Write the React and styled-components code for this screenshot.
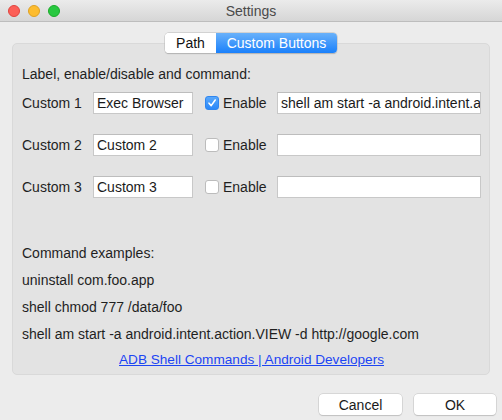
import React from "react";
import styled, { createGlobalStyle } from "styled-components";

const Global = createGlobalStyle`
  html, body { margin: 0; padding: 0; background: #ececec; }
  body { font-family: "Liberation Sans", Arial, sans-serif; font-size: 14px; color: #1f1f1f; }
  * { box-sizing: border-box; }
`;

const Window = styled.div`
  width: 502px;
  height: 420px;
  background: #ececec;
  display: flex;
  flex-direction: column;
  overflow: hidden;
`;

const TitleBar = styled.div`
  height: 22px;
  display: grid;
  grid-template-columns: 1fr auto 1fr;
  align-items: center;
  background: linear-gradient(#ebebeb, #d6d6d6);
  border-bottom: 1px solid #bdbdbd;
`;

const Lights = styled.div`
  display: flex;
  gap: 8px;
  padding-left: 8px;
`;

const Light = styled.span`
  width: 12px;
  height: 12px;
  border-radius: 50%;
  background: ${(p) => p.$c};
  border: 0.5px solid ${(p) => p.$b};
`;

const Title = styled.div`
  font-size: 14px;
  color: #4a4a4a;
`;

const Body = styled.div`
  display: flex;
  flex-direction: column;
  align-items: center;
  padding-top: 11px;
`;

const Tabs = styled.div`
  display: flex;
  height: 20px;
  margin-bottom: -10px;
  position: relative;
  z-index: 1;
  border-radius: 4px;
  background: #fff;
  box-shadow: 0 0 0 0.5px #bdbdbd, 0 0.5px 1px rgba(0, 0, 0, 0.25);
  overflow: hidden;
`;

const Tab = styled.div`
  display: flex;
  align-items: center;
  justify-content: center;
  width: ${(p) => p.$w}px;
  font-size: 14px;
  color: ${(p) => (p.$active ? "#fff" : "#111")};
  background: ${(p) => (p.$active ? "linear-gradient(#69b1fa, #1a80fb)" : "#fff")};
`;

const Panel = styled.div`
  align-self: stretch;
  margin: 0 12px;
  height: 332px;
  background: #e3e3e3;
  border: 1px solid #d9d9d9;
  border-radius: 5px;
  padding: 22px 8px 0 9px;
  display: flex;
  flex-direction: column;
`;

const Line = styled.div`
  line-height: 16px;
  height: 16px;
  white-space: nowrap;
`;

const Rows = styled.div`
  display: flex;
  flex-direction: column;
  gap: 20px;
  margin-top: 10px;
`;

const Row = styled.div`
  display: flex;
  align-items: center;
  height: 22px;
`;

const RowLabel = styled.div`
  width: 71px;
`;

const Field = styled.div`
  height: 22px;
  width: ${(p) => (p.$w ? `${p.$w}px` : "auto")};
  flex: ${(p) => (p.$w ? "none" : "1")};
  min-width: 0;
  background: #fff;
  border: 1px solid #c8c8c8;
  border-top-color: #bdbdbd;
  padding: 0 3px;
  display: flex;
  align-items: center;
  white-space: nowrap;
  overflow: hidden;
  color: #1a1a1a;
`;

const Check = styled.label`
  width: 84px;
  display: flex;
  align-items: center;
  gap: 4px;
  padding-left: 12px;
`;

const Box = styled.span`
  width: 14px;
  height: 14px;
  border-radius: 3px;
  display: flex;
  align-items: center;
  justify-content: center;
  background: ${(p) => (p.$on ? "linear-gradient(#59a8fb, #2b88f9)" : "#fff")};
  border: 1px solid ${(p) => (p.$on ? "#2f86f0" : "#bcbcbc")};
`;

const Examples = styled.div`
  display: flex;
  flex-direction: column;
  gap: 11px;
  margin-top: 47px;
`;

const Link = styled.a`
  align-self: center;
  font-size: 13.6px;
  line-height: 16px;
  margin-top: -1px;
  color: #1c45f3;
  text-decoration: underline;
`;

const Footer = styled.div`
  align-self: stretch;
  display: flex;
  justify-content: flex-end;
  gap: 12px;
  padding: 19px 6px 0 0;
`;

const Button = styled.button`
  width: ${(p) => p.$w}px;
  height: 21px;
  font-family: inherit;
  font-size: 14px;
  color: #1a1a1a;
  background: #fff;
  border: none;
  border-radius: 4px;
  box-shadow: 0 0 0 0.5px #c2c2c2, 0 1px 1px rgba(0, 0, 0, 0.18);
  padding: 0;
`;

const rows = [
  { label: "Custom 1", name: "Exec Browser", on: true, cmd: "shell am start -a android.intent.action.VIEW -d http://google.com" },
  { label: "Custom 2", name: "Custom 2", on: false, cmd: "" },
  { label: "Custom 3", name: "Custom 3", on: false, cmd: "" },
];

export default function App() {
  return (
    <Window>
      <Global />
      <TitleBar>
        <Lights>
          <Light $c="#fc5f57" $b="#e0443e" />
          <Light $c="#fdbc2e" $b="#dea123" />
          <Light $c="#28c840" $b="#1aab29" />
        </Lights>
        <Title>Settings</Title>
        <div />
      </TitleBar>
      <Body>
        <Tabs>
          <Tab $w={51}>Path</Tab>
          <Tab $w={121} $active>Custom Buttons</Tab>
        </Tabs>
        <Panel>
          <Line>Label, enable/disable and command:</Line>
          <Rows>
            {rows.map((r) => (
              <Row key={r.label}>
                <RowLabel>{r.label}</RowLabel>
                <Field $w={100}>{r.name}</Field>
                <Check>
                  <Box $on={r.on}>
                    {r.on && (
                      <svg width="10" height="10" viewBox="0 0 10 10">
                        <path d="M2 5.2 L4.2 7.6 L8.2 2" fill="none" stroke="#fff" strokeWidth="1.6" strokeLinecap="round" strokeLinejoin="round" />
                      </svg>
                    )}
                  </Box>
                  Enable
                </Check>
                <Field>{r.cmd}</Field>
              </Row>
            ))}
          </Rows>
          <Examples>
            <Line>Command examples:</Line>
            <Line>uninstall com.foo.app</Line>
            <Line>shell chmod 777 /data/foo</Line>
            <Line>shell am start -a android.intent.action.VIEW -d http://google.com</Line>
            <Link href="#">ADB Shell Commands | Android Developers</Link>
          </Examples>
        </Panel>
        <Footer>
          <Button $w={83}>Cancel</Button>
          <Button $w={82}>OK</Button>
        </Footer>
      </Body>
    </Window>
  );
}
